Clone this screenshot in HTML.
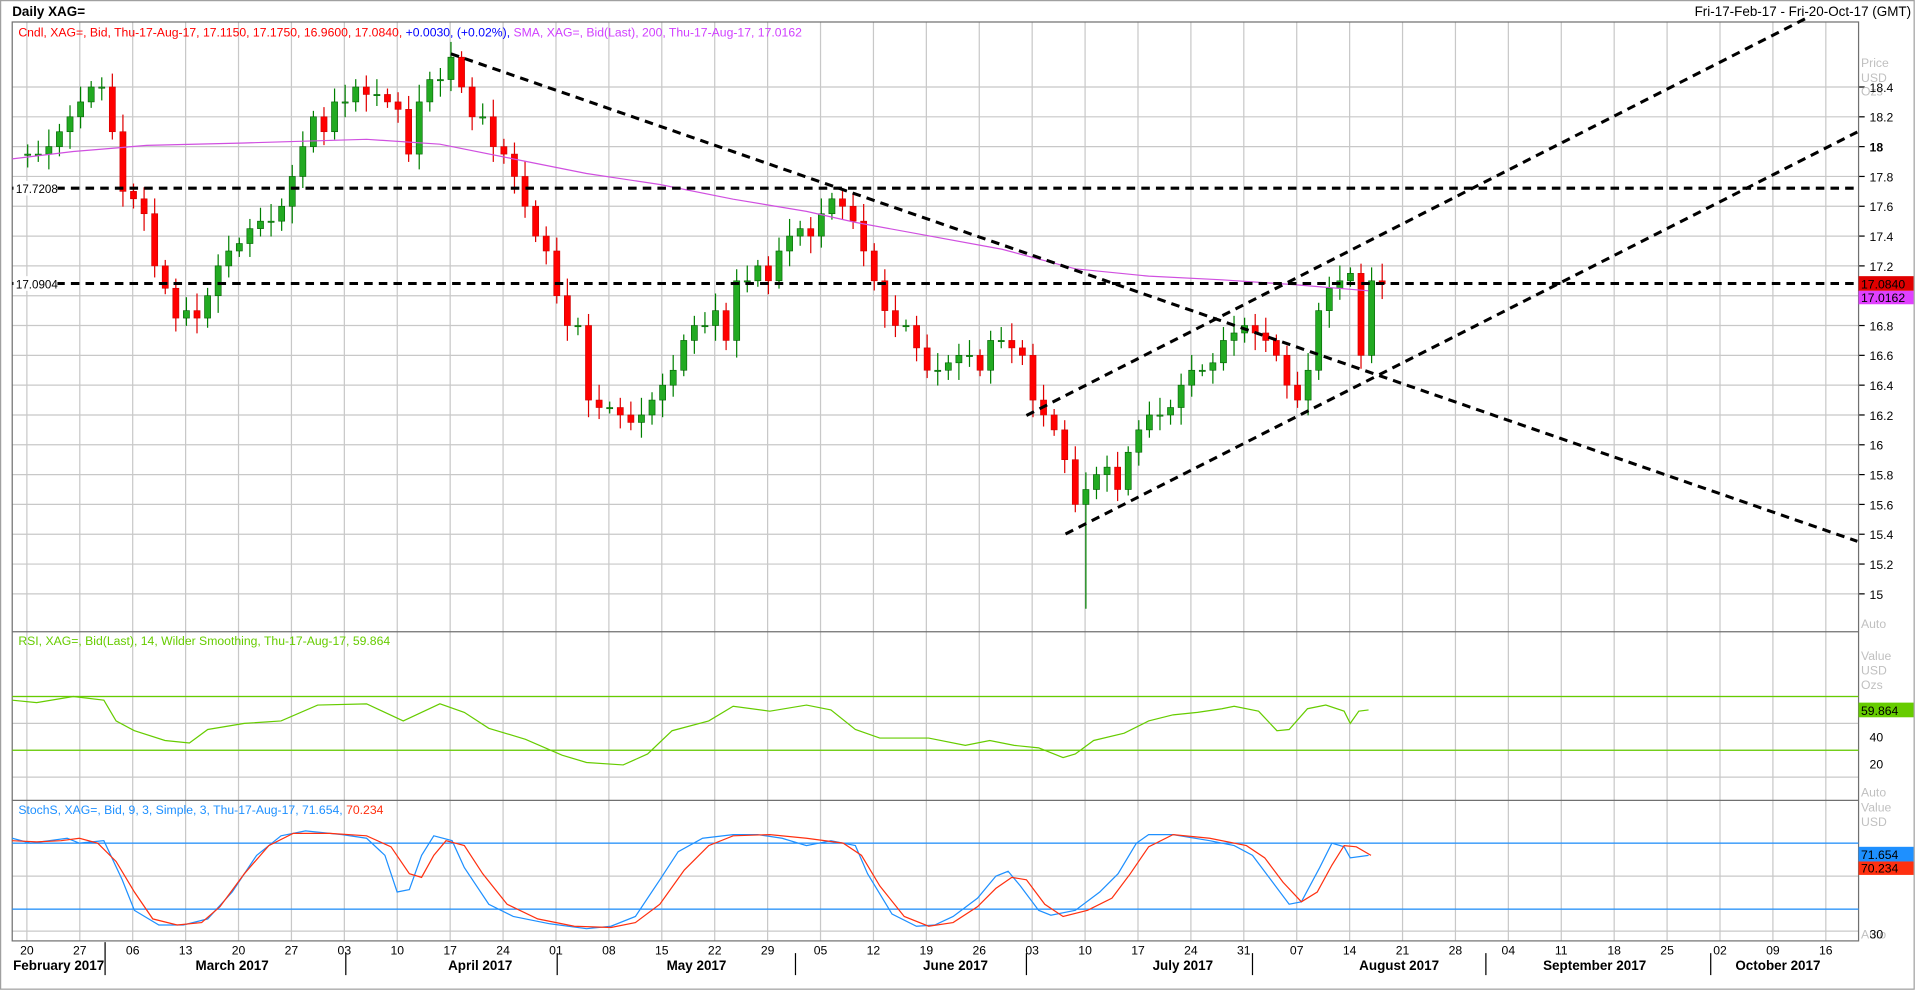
<!DOCTYPE html>
<html><head><meta charset="utf-8"><style>
html,body{margin:0;padding:0;background:#fff;overflow:hidden}
svg{display:block}
text{font-family:"Liberation Sans",sans-serif}
</style></head><body>
<svg id="s" width="1916" height="991" viewBox="0 0 1568 811" preserveAspectRatio="none" xmlns="http://www.w3.org/2000/svg">
<rect x="0" y="0" width="1568" height="811" fill="#fff"/>
<rect x="0.5" y="0.5" width="1566" height="809" fill="none" stroke="#a0a0a0"/>
<g id="grid" stroke="#c8c8c8" stroke-width="1"></g>
<g id="rgrid"></g>
<rect x="10" y="18" width="1511" height="752" fill="none" stroke="#707070"/>
<line x1="10" y1="517" x2="1521" y2="517" stroke="#707070"/>
<line x1="10" y1="655" x2="1521" y2="655" stroke="#707070"/>
<line x1="10" y1="570" x2="1521" y2="570" stroke="#66cc00"/>
<line x1="10" y1="614" x2="1521" y2="614" stroke="#66cc00"/>
<line x1="10" y1="690" x2="1521" y2="690" stroke="#1e90ff"/>
<line x1="10" y1="744" x2="1521" y2="744" stroke="#1e90ff"/>
<g id="cand"></g>
<polyline fill="none" stroke="#d050e0" stroke-width="1" points="10,130 60,124 120,119 200,117 300,114 360,118 420,130 480,142 540,151 600,163 660,173 700,182 760,193 820,204 880,220 940,226 1000,229 1060,233 1120,238"/>
<g stroke="#000" stroke-width="2.5" stroke-dasharray="7,5" fill="none">
<line x1="10" y1="154" x2="1520" y2="154"/>
<line x1="10" y1="232" x2="1520" y2="232"/>
<line x1="369" y1="44" x2="1520" y2="443"/>
<line x1="840" y1="340" x2="1480" y2="14"/>
<line x1="872" y1="437" x2="1520" y2="108"/>
</g>
<polyline fill="none" stroke="#66cc00" stroke-width="1" points="10,573 30,575 60,570 85,573 95,590 110,598 135,606 155,608 170,597 200,592 230,590 260,577 300,576 330,590 360,576 380,583 400,596 430,605 460,618 480,624 510,626 530,617 550,598 580,590 600,578 630,582 660,577 680,581 700,597 720,604 760,604 790,610 810,606 830,610 850,612 870,620 880,617 895,606 920,600 940,590 960,585 980,583 1000,580 1010,578 1030,582 1045,598 1055,597 1070,580 1085,577 1100,582 1105,592 1112,582 1120,581"/>
<polyline fill="none" stroke="#1e90ff" stroke-width="1" points="10,686 25,690 40,688 55,686 65,690 85,688 100,720 110,745 130,757 150,757 170,752 190,730 210,700 230,684 250,680 280,683 300,686 315,700 325,730 335,728 345,700 355,684 370,688 380,710 400,740 420,750 450,756 480,760 500,758 520,750 540,720 555,697 575,686 600,683 620,683 640,686 660,692 680,688 700,692 710,715 730,748 750,758 765,757 780,750 800,735 815,717 825,713 835,725 850,745 860,749 880,745 900,730 915,715 930,690 940,683 960,683 990,688 1010,692 1025,700 1040,720 1055,740 1065,738 1080,710 1090,690 1100,693 1105,702 1120,700"/>
<polyline fill="none" stroke="#ff3010" stroke-width="1" points="10,688 30,689 50,688 65,686 80,690 95,705 110,730 125,752 145,757 165,755 180,742 200,715 220,692 240,682 270,682 300,684 320,693 335,715 345,718 355,700 365,688 380,692 395,715 415,740 440,752 470,758 500,759 520,755 540,740 560,712 580,692 600,684 630,683 660,686 690,690 705,700 720,725 740,750 760,758 780,755 800,742 815,727 828,718 840,720 855,740 870,750 890,745 910,735 925,715 940,693 960,683 990,686 1020,692 1035,702 1050,722 1065,738 1078,730 1090,708 1100,692 1110,693 1122,700"/>
<text x="10" y="13" font-size="11" font-weight="bold" fill="#000">Daily XAG=</text>
<text x="1564" y="13" font-size="11" fill="#000" text-anchor="end">Fri-17-Feb-17 - Fri-20-Oct-17 (GMT)</text>
<text x="15" y="30" font-size="10"><tspan fill="#ff0000">Cndl, XAG=, Bid, Thu-17-Aug-17, 17.1150, 17.1750, 16.9600, 17.0840, </tspan><tspan fill="#0000ff">+0.0030, (+0.02%), </tspan><tspan fill="#d040ff">SMA, XAG=, Bid(Last),  200, Thu-17-Aug-17, 17.0162</tspan></text>
<text x="15" y="528" font-size="10" fill="#66cc00">RSI, XAG=, Bid(Last), 14, Wilder Smoothing, Thu-17-Aug-17, 59.864</text>
<text x="15" y="666" font-size="10"><tspan fill="#1e90ff">StochS, XAG=, Bid, 9, 3, Simple, 3, Thu-17-Aug-17, 71.654, </tspan><tspan fill="#ff3010">70.234</tspan></text>
<rect x="11" y="148" width="36" height="12" fill="#fff"/><text x="13" y="158" font-size="9.5">17.7208</text>
<rect x="11" y="226" width="36" height="12" fill="#fff"/><text x="13" y="236" font-size="9.5">17.0904</text>
<g font-size="10" fill="#c0c0c0"><text x="1523" y="55">Price</text><text x="1523" y="67">USD</text><text x="1523" y="78">Ozs</text>
<text x="1523" y="540">Value</text><text x="1523" y="552">USD</text><text x="1523" y="564">Ozs</text>
<text x="1523" y="652">Auto</text><text x="1523" y="664">Value</text><text x="1523" y="676">USD</text><text x="1523" y="514">Auto</text><text x="1523" y="768">Auto</text></g>
<g id="plab" font-size="10" fill="#000"></g>
<rect x="1521" y="226" width="45" height="12" fill="#e00000"/><text x="1523" y="236" font-size="10" fill="#000">17.0840</text>
<rect x="1521" y="238" width="45" height="11" fill="#e040ff"/><text x="1523" y="247" font-size="10" fill="#000">17.0162</text>
<rect x="1521" y="575" width="45" height="12" fill="#66cc00"/><text x="1523" y="585" font-size="10" fill="#000">59.864</text>
<rect x="1521" y="693" width="45" height="12" fill="#1e90ff"/><text x="1523" y="703" font-size="10" fill="#000">71.654</text>
<rect x="1521" y="705" width="45" height="11" fill="#ff3010"/><text x="1523" y="714" font-size="10" fill="#000">70.234</text>
<g font-size="10" fill="#000"><text x="1530" y="607">40</text><text x="1530" y="629">20</text><text x="1530" y="768">30</text></g>
<g id="dates" font-size="10" fill="#000" text-anchor="middle"></g>
<g font-size="11" font-weight="bold" fill="#000" text-anchor="middle">
<text x="48" y="794">February 2017</text><text x="190" y="794">March 2017</text><text x="393" y="794">April 2017</text><text x="570" y="794">May 2017</text><text x="782" y="794">June 2017</text><text x="968" y="794">July 2017</text><text x="1145" y="794">August 2017</text><text x="1305" y="794">September 2017</text><text x="1455" y="794">October 2017</text></g>
<g stroke="#000" stroke-width="1"><line x1="86" y1="771" x2="86" y2="798"/><line x1="283" y1="780" x2="283" y2="798"/><line x1="456" y1="780" x2="456" y2="798"/><line x1="651" y1="780" x2="651" y2="798"/><line x1="840" y1="780" x2="840" y2="798"/><line x1="1025" y1="780" x2="1025" y2="798"/><line x1="1216" y1="780" x2="1216" y2="798"/><line x1="1400" y1="780" x2="1400" y2="798"/></g>
</svg>
<script>
var NS="http://www.w3.org/2000/svg";
function el(p,t,a,tx){var e=document.createElementNS(NS,t);for(var k in a)e.setAttribute(k,a[k]);if(tx)e.textContent=tx;document.getElementById(p).appendChild(e);}
var dl=["20","27","06","13","20","27","03","10","17","24","01","08","15","22","29","05","12","19","26","03","10","17","24","31","07","14","21","28","04","11","18","25","02","09","16"];
for(var i=0;i<dl.length;i++){var x=22+i*43.3;el("grid","line",{x1:x,y1:18,x2:x,y2:770});el("dates","text",{x:x,y:781},dl[i]);}
function py(p){return 120+(18-p)*122;}
for(var p=15;p<=18.41;p+=0.2){var y=py(p);el("grid","line",{x1:10,y1:y,x2:1521,y2:y});el("rgrid","line",{x1:1521,y1:y,x2:1526,y2:y,stroke:"#000"});
var s=(Math.abs(p-18)<0.01)?"18":(Math.abs(p-Math.round(p))<0.01?String(Math.round(p)):p.toFixed(1));el("plab","text",{x:1530,y:y+4,"font-weight":s=="18"?"bold":"normal"},s);}
[570,592,614,636].forEach(function(y){el("grid","line",{x1:10,y1:y,x2:1521,y2:y});});
[690,717,744,762].forEach(function(y){el("grid","line",{x1:10,y1:y,x2:1521,y2:y});});
var c=[17.95,17.95,17.95,18.0,18.1,18.2,18.3,18.4,18.4,18.1,17.7,17.65,17.55,17.2,17.05,16.85,16.9,16.85,17.0,17.2,17.3,17.35,17.45,17.5,17.5,17.6,17.8,18.0,18.2,18.1,18.3,18.3,18.4,18.35,18.35,18.3,18.25,17.95,18.3,18.45,18.45,18.6,18.4,18.2,18.2,18.0,17.95,17.8,17.6,17.4,17.3,17.0,16.8,16.8,16.3,16.25,16.25,16.2,16.15,16.2,16.3,16.4,16.5,16.7,16.8,16.8,16.9,16.7,17.1,17.1,17.2,17.1,17.3,17.4,17.45,17.4,17.55,17.65,17.6,17.5,17.3,17.1,16.9,16.8,16.8,16.65,16.5,16.5,16.55,16.6,16.6,16.5,16.7,16.7,16.65,16.6,16.3,16.2,16.1,15.9,15.6,15.7,15.8,15.85,15.7,15.95,16.1,16.2,16.2,16.25,16.4,16.5,16.5,16.55,16.7,16.75,16.8,16.75,16.7,16.6,16.4,16.3,16.5,16.9,17.05,17.1,17.15,16.6,17.1,17.08];
for(var i=1;i<c.length;i++){var x=14+i*8.66,o=c[i-1],cl=c[i],up=cl>=o;var hi=Math.max(o,cl)+0.04+((i*37)%7)/80,lo=Math.min(o,cl)-0.04-((i*53)%7)/80;if(i==101)lo=14.9;
el("cand","line",{x1:x,y1:py(hi),x2:x,y2:py(lo),stroke:up?"#008000":"#e00000"});
var y1=py(Math.max(o,cl)),h=Math.max(1,py(Math.min(o,cl))-y1);el("cand","rect",{x:x-2.5,y:y1,width:5,height:h,fill:up?"#22aa22":"#ff0000",stroke:up?"#006000":"#cc0000","stroke-width":0.5});}
</script>
</body></html>
